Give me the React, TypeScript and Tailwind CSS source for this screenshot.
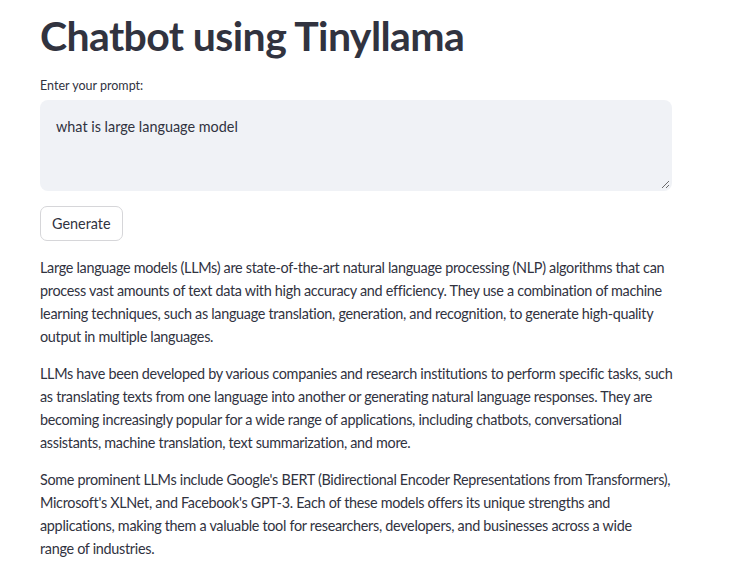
import React from "react";

const paragraphs: string[][] = [
    [
        "Large language models (LLMs) are state-of-the-art natural language processing (NLP) algorithms that can",
        "process vast amounts of text data with high accuracy and efficiency. They use a combination of machine",
        "learning techniques, such as language translation, generation, and recognition, to generate high-quality",
        "output in multiple languages.",
    ],
    [
        "LLMs have been developed by various companies and research institutions to perform specific tasks, such",
        "as translating texts from one language into another or generating natural language responses. They are",
        "becoming increasingly popular for a wide range of applications, including chatbots, conversational",
        "assistants, machine translation, text summarization, and more.",
    ],
    [
        "Some prominent LLMs include Google's BERT (Bidirectional Encoder Representations from Transformers),",
        "Microsoft's XLNet, and Facebook's GPT-3. Each of these models offers its unique strengths and",
        "applications, making them a valuable tool for researchers, developers, and businesses across a wide",
        "range of industries.",
    ],
];

export default function App() {
    return (
        <div className="min-h-[566px] w-full bg-white text-[#31333F] font-['Lato','Liberation_Sans',sans-serif]">
            <div className="w-[632px] ml-[40px] pt-[12px]">
                <h1 className="text-[41px] leading-[48px] font-bold tracking-[-0.6px]">Chatbot using Tinyllama</h1>

                <label className="block mt-[17px] text-[12.5px] leading-[18px]">Enter your prompt:</label>

                {/* prompt box */}
                <div className="relative mt-[5px] h-[91px] rounded-lg bg-[#F0F2F6] px-4 pt-[16px] text-[14.4px] leading-[22px]">
                    what is large language model
                    <svg className="absolute right-[2px] bottom-[2px]" width="9" height="9" viewBox="0 0 9 9">
                        <path d="M8 1 L1 8 M8 5 L5 8" stroke="#6b6b6b" strokeWidth="1" fill="none" />
                    </svg>
                </div>

                <button className="mt-[15px] h-[35px] px-[11px] rounded-[7px] border border-[#D6D6D9] bg-white text-[14.4px]">
                    Generate
                </button>

                <div className="mt-[15px] text-[14.4px] leading-[23px] tracking-[-0.3px]">
                    {paragraphs.map((lines, i) => (
                        <p key={i} className="mb-[14px]">
                            {lines.map((l, j) => (
                                <span key={j} className="block whitespace-nowrap">{l}</span>
                            ))}
                        </p>
                    ))}
                </div>
            </div>
        </div>
    );
}
